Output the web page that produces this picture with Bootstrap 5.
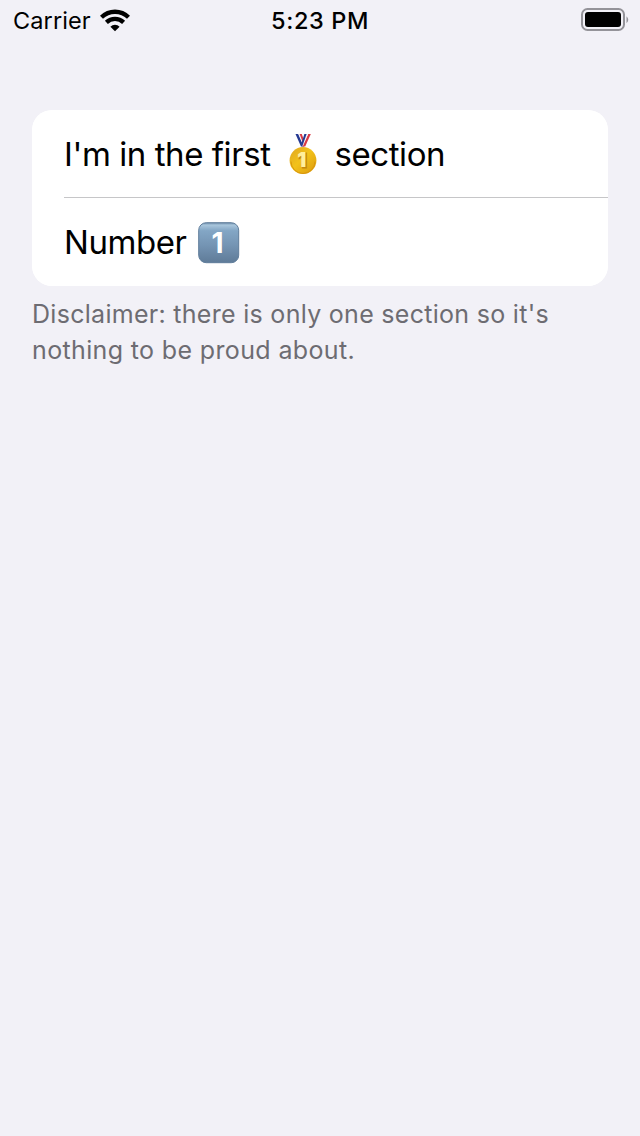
<!DOCTYPE html>
<html lang="en">
<head>
<meta charset="utf-8">
<meta name="viewport" content="width=device-width, initial-scale=1">
<title>Grouped list</title>
<link href="https://cdn.jsdelivr.net/npm/bootstrap@5.3.0/dist/css/bootstrap.min.css" rel="stylesheet">
<style>
body { background: #f2f1f7; color: #000; font-family: Inter, "Liberation Sans", sans-serif; }
.status-bar { height: 40px; padding: 0 11px 0 13px; font-size: 23.5px; line-height: 40px; }
.status-side { flex: 1 1 0; }
.carrier { letter-spacing: .1px; padding-top: 2px; line-height: 38px; }
.clock { font-weight: 500; letter-spacing: .6px; padding: 2px 2px 0 0; line-height: 38px; }
.group-wrap { padding: 70px 32px 0; }
.group-list { --bs-list-group-border-width: 0; border-radius: 20px; background: #fff; overflow: hidden; }
.group-row { height: 88px; padding: 0 0 0 32px; font-size: 33px; line-height: 88px; color: #000; background: #fff; border: 0; }
.row-inner { height: 88px; letter-spacing: -.43px; }
.row-inner.divided { border-bottom: 1px solid #c6c6c8; }
.divided span { padding-top: 2px; line-height: 85px; }
.medal { width: 28px; height: 42px; margin: 0 18px 0 18px; }
.keycap { width: 42px; height: 42px; margin-left: 11px; margin-top: 1px; }
.footnote { margin: 10px 0 0; font-size: 25px; line-height: 36px; letter-spacing: .29px; color: #6d6c72; }
.footnote .last-line { letter-spacing: .36px; }
</style>
</head>
<body>
<header class="status-bar d-flex align-items-center">
  <div class="status-side d-flex align-items-center">
    <span class="carrier">Carrier</span>
    <svg class="ms-2" width="32" height="24" viewBox="0 0 32 24" aria-label="Wi-Fi">
      <g fill="none" stroke="#000" stroke-width="4.3">
        <path d="M2.5 9.2 A19.4 19.4 0 0 1 29.5 9.2"/>
        <path d="M7.4 14.4 A12.5 12.5 0 0 1 24.6 14.4"/>
      </g>
      <path d="M11.4 18.8 A6.4 6.4 0 0 1 20.6 18.8 L16 23.2Z"/>
    </svg>
  </div>
  <span class="clock">5:23 PM</span>
  <div class="status-side d-flex justify-content-end">
    <svg width="48" height="24" viewBox="0 0 48 24" aria-label="Battery full">
      <rect x="1" y="1" width="42" height="21" rx="5.5" fill="none" stroke="#949399" stroke-width="2"/>
      <rect x="4" y="4" width="36" height="15" rx="3"/>
      <path d="M45.5 8.2Q49 11.7 45.5 15.3Z" fill="#949399"/>
    </svg>
  </div>
</header>
<main class="group-wrap">
  <ul class="list-group group-list">
    <li class="list-group-item group-row">
      <div class="row-inner divided d-flex align-items-center">
        <span>I'm in the first</span>
        <svg class="medal" viewBox="0 0 28 42" aria-label="First place medal">
          <defs>
            <linearGradient id="gold" x1="0" y1="0" x2="1" y2="1"><stop offset="0" stop-color="#dfa622"/><stop offset=".45" stop-color="#f2c21a"/><stop offset="1" stop-color="#dc9a0c"/></linearGradient>
          </defs>
          <path d="M6.5 1h3l5.5 12.5h-3z" fill="#253a92"/><path d="M9.2 1h2.2l4.3 10-1.3 2z" fill="#f4f4fa"/><path d="M10.6 1h2.2l2.8 8-.8 3z" fill="#d93a45"/>
          <path d="M21.8 1h-2.6l-6 12.5h3z" fill="#d93a45"/><path d="M19.2 1h-2.2l-4.2 10 1 2.5z" fill="#f4f4fa"/><path d="M17.6 1h-2.2l-2.8 9 .8 3z" fill="#253a92"/>
          <circle cx="14" cy="27.5" r="13.4" fill="url(#gold)"/>
          <path d="M2 28.5a12 12 0 0 0 24 0" fill="none" stroke="#d8960e" stroke-width="1"/>
          <text x="13.7" y="34.9" text-anchor="middle" font-size="20" font-weight="900" letter-spacing="0" fill="#c58910" stroke="#c58910" stroke-width="1">1</text>
          <text x="12.8" y="34.3" text-anchor="middle" font-size="20" font-weight="900" letter-spacing="0" fill="#ffef9c">1</text>
        </svg>
        <span>section</span>
      </div>
    </li>
    <li class="list-group-item group-row">
      <div class="row-inner d-flex align-items-center">
        <span>Number</span>
        <svg class="keycap" viewBox="0 0 42 42" aria-label="Keycap 1">
          <defs>
            <linearGradient id="key" x1="0" y1="0" x2="0" y2="1"><stop offset="0" stop-color="#6b8cab"/><stop offset=".06" stop-color="#a9c6dc"/><stop offset=".2" stop-color="#83a6c5"/><stop offset=".55" stop-color="#7595b4"/><stop offset="1" stop-color="#5f7b98"/></linearGradient>
          </defs>
          <rect x=".7" y=".7" width="40" height="40" rx="7.5" fill="url(#key)" stroke="#5f7d9b" stroke-width="1"/>
          <text x="19.5" y="30.5" text-anchor="middle" font-size="28" font-weight="700" letter-spacing="0" fill="#fff">1</text>
        </svg>
      </div>
    </li>
  </ul>
  <p class="footnote">Disclaimer: there is only one section so it's<br><span class="last-line">nothing to be proud about.</span></p>
</main>
<script src="https://cdn.jsdelivr.net/npm/bootstrap@5.3.0/dist/js/bootstrap.bundle.min.js"></script>
</body>
</html>
